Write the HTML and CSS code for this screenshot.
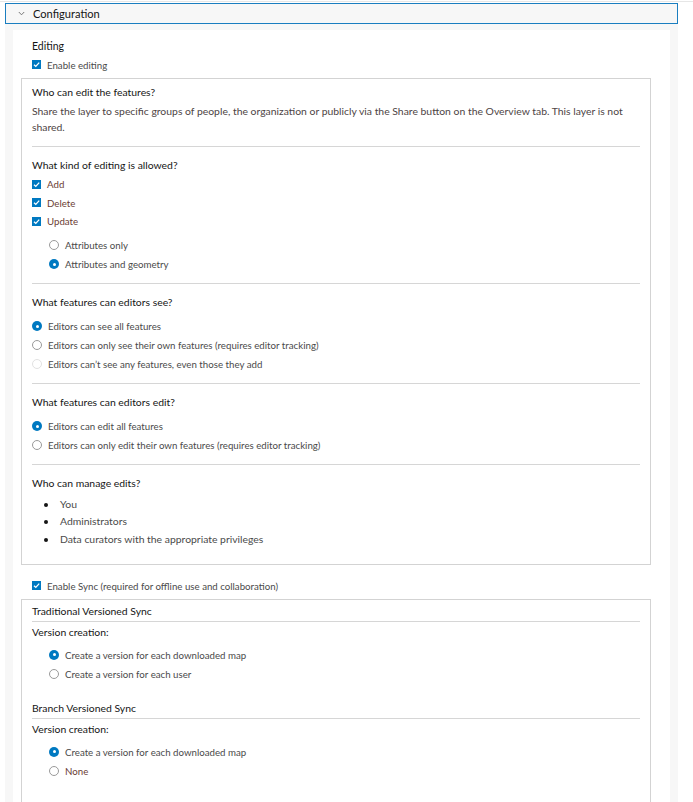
FILE: index.html
```html
<!DOCTYPE html>
<html>
<head>
<meta charset="utf-8">
<link rel="stylesheet" href="styles.css">
</head>
<body>
<div class="page">
  <div class="acc-head">
    <svg class="chev" width="7" height="5" viewBox="0 0 7 5"><polyline points="0.8,1 3.5,3.8 6.2,1" fill="none" stroke="#6a6a6a" stroke-width="0.9"/></svg>
    <span class="acc-title">Configuration</span>
  </div>
  <div class="acc-body">
    <div class="panel">
      <div class="sec-title">Editing</div>
      <label class="row chk-row top-chk"><span class="cb"><svg width="9" height="9" viewBox="0 0 9 9"><polyline points="2,4.7 3.8,6.4 7.2,2.6" fill="none" stroke="#fff" stroke-width="1.3"/></svg></span><span class="lbl">Enable editing</span></label>

      <div class="box">
        <div class="sect s1">
          <div class="h">Who can edit the features?</div>
          <p class="desc">Share the layer to specific groups of people, the organization or publicly via the Share button on the Overview tab. This layer is not shared.</p>
        </div>
        <div class="divider"></div>
        <div class="sect">
          <div class="h">What kind of editing is allowed?</div>
          <div class="list tight">
            <label class="row"><span class="cb"><svg width="9" height="9" viewBox="0 0 9 9"><polyline points="2,4.7 3.8,6.4 7.2,2.6" fill="none" stroke="#fff" stroke-width="1.3"/></svg></span><span class="lbl warm">Add</span></label>
            <label class="row"><span class="cb"><svg width="9" height="9" viewBox="0 0 9 9"><polyline points="2,4.7 3.8,6.4 7.2,2.6" fill="none" stroke="#fff" stroke-width="1.3"/></svg></span><span class="lbl warm">Delete</span></label>
            <label class="row"><span class="cb"><svg width="9" height="9" viewBox="0 0 9 9"><polyline points="2,4.7 3.8,6.4 7.2,2.6" fill="none" stroke="#fff" stroke-width="1.3"/></svg></span><span class="lbl warm">Update</span></label>
          </div>
          <div class="list sub">
            <label class="row"><span class="rb"></span><span class="lbl rl">Attributes only</span></label>
            <label class="row"><span class="rb on"></span><span class="lbl rl">Attributes and geometry</span></label>
          </div>
        </div>
        <div class="divider"></div>
        <div class="sect">
          <div class="h">What features can editors see?</div>
          <div class="list radios">
            <label class="row"><span class="rb on"></span><span class="lbl rl">Editors can see all features</span></label>
            <label class="row"><span class="rb"></span><span class="lbl rl">Editors can only see their own features (requires editor tracking)</span></label>
            <label class="row"><span class="rb off"></span><span class="lbl rl">Editors can’t see any features, even those they add</span></label>
          </div>
        </div>
        <div class="divider"></div>
        <div class="sect">
          <div class="h">What features can editors edit?</div>
          <div class="list radios">
            <label class="row"><span class="rb on"></span><span class="lbl rl">Editors can edit all features</span></label>
            <label class="row"><span class="rb"></span><span class="lbl rl">Editors can only edit their own features (requires editor tracking)</span></label>
          </div>
        </div>
        <div class="divider"></div>
        <div class="sect last">
          <div class="h">Who can manage edits?</div>
          <ul class="bullets">
            <li>You</li>
            <li>Administrators</li>
            <li>Data curators with the appropriate privileges</li>
          </ul>
        </div>
      </div>

      <label class="row chk-row sync-chk"><span class="cb"><svg width="9" height="9" viewBox="0 0 9 9"><polyline points="2,4.7 3.8,6.4 7.2,2.6" fill="none" stroke="#fff" stroke-width="1.3"/></svg></span><span class="lbl">Enable Sync (required for offline use and collaboration)</span></label>

      <div class="box box2">
        <div class="h sync-h">Traditional Versioned Sync</div>
        <div class="divider thin"></div>
        <div class="vc">Version creation:</div>
        <div class="list sub vlist">
          <label class="row"><span class="rb on"></span><span class="lbl rl">Create a version for each downloaded map</span></label>
          <label class="row"><span class="rb"></span><span class="lbl rl">Create a version for each user</span></label>
        </div>
        <div class="h sync-h branch">Branch Versioned Sync</div>
        <div class="divider thin"></div>
        <div class="vc">Version creation:</div>
        <div class="list sub vlist">
          <label class="row"><span class="rb on"></span><span class="lbl rl">Create a version for each downloaded map</span></label>
          <label class="row"><span class="rb"></span><span class="lbl rl warm">None</span></label>
        </div>
      </div>
    </div>
  </div>
</div>
</body>
</html>
```
FILE: styles.css
```css
* { box-sizing: border-box; }
html, body { margin: 0; padding: 0; background: #fff; }
body {
  font-family: "Lato", "Liberation Sans", sans-serif;
  font-size: 10.4px;
  color: #4a4a4a;
  border-top: 1px solid #e6e6e6;
  margin-top: 1px;
  height: 801px;
  overflow: hidden;
}
.page { padding: 1px 15px 0 5px; }

.acc-head {
  height: 21px;
  border: 1px solid #1a7ec0;
  background: #f7f7f7;
  display: flex;
  align-items: center;
  padding-left: 12px;
  padding-bottom: 1px;
}
.chev { display: block; margin-right: 8px; margin-top: 0; }
.acc-title { font-size: 11.1px; color: #151515; }

.acc-body {
  background: #f7f7f7;
  padding: 6px 8px 0 8px;
}
.panel {
  background: #fff;
  padding: 8px 19px 40px 8px;
}
.sec-title {
  padding-left: 11px;
  line-height: 16px;
  color: #151515;
  font-size: 10.5px;
}
.row {
  display: flex;
  align-items: center;
  height: 19px;
}
.chk-row { padding-left: 11px; }
.top-chk { margin-top: 1px; }
.cb {
  width: 9px; height: 9px;
  background: #0079c1;
  display: block;
  flex: none;
}
.cb svg { display: block; }
.lbl { margin-left: 6px; white-space: nowrap; font-size: 9.7px; }
.rl { margin-left: 6px; }
.warm { color: #6b3d33; }

.box {
  margin-top: 4px;
  border: 1px solid #d3d3d3;
  padding: 5px 10px 16px 10px;
}
.h { line-height: 16px; color: #151515; }
.desc {
  margin: 3px 0 0 0;
  line-height: 16px;
  color: #4d4444;
}
.divider { height: 1px; background: #d6d6d6; }
.sect { padding: 10px 0 9px; }
.s1 { padding-top: 0; padding-bottom: 11px; }
.sect.last { padding-bottom: 0; }
.list.tight { margin-top: 2px; }
.list.tight .row { height: 18.5px; }
.list.sub { padding-left: 17px; margin-top: 5px; }
.list.radios { margin-top: 7px; }

.rb {
  width: 10px; height: 10px;
  border-radius: 50%;
  border: 1px solid #9a9a9a;
  background: #fff;
  display: block;
  flex: none;
  position: relative;
}
.rb.on {
  border: none;
  background: #0079c1;
}
.rb.on::after {
  content: "";
  position: absolute;
  left: 3.5px; top: 3.5px;
  width: 3px; height: 3px;
  border-radius: 50%;
  background: #fff;
}
.rb.off { border-color: #e2e2e2; }

.bullets {
  list-style: none;
  margin: 5px 0 0 0;
  padding: 0;
}
.bullets li {
  line-height: 17.5px;
  padding-left: 28px;
  position: relative;
}
.bullets li::before {
  content: "";
  position: absolute;
  left: 12px; top: 7px;
  width: 4px; height: 4px;
  border-radius: 50%;
  background: #151515;
}

.sync-chk { margin-top: 11px; }
.box2 { margin-top: 4px; padding: 3px 10px 40px 10px; }
.sync-h { line-height: 16px; margin-bottom: 2px; }
.vc { margin-top: 2px; line-height: 16px; color: #151515; }
.vlist { margin-top: 6px; }
.branch { margin-top: 17px; }
```
